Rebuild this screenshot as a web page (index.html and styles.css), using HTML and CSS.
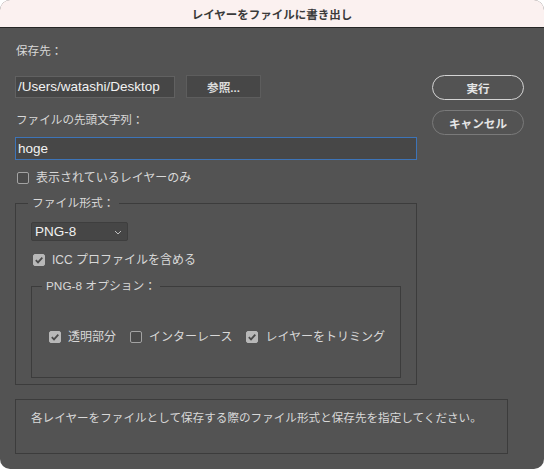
FILE: index.html
```html
<!DOCTYPE html>
<html lang="ja">
<head>
<meta charset="utf-8">
<link rel="stylesheet" href="styles.css">
</head>
<body>
<div class="window">
  <div class="titlebar">レイヤーをファイルに書き出し</div>
  <div class="content">
    <div class="top">
      <div class="main">
        <div class="label first">保存先：</div>
        <div class="pathrow">
          <div class="input path">/Users/watashi/Desktop</div>
          <div class="btn browse">参照...</div>
        </div>
        <div class="label second">ファイルの先頭文字列：</div>
        <div class="input prefix">hoge</div>
        <label class="check visible"><span class="box"></span><span>表示されているレイヤーのみ</span></label>
        <fieldset class="group outer">
          <legend>ファイル形式：</legend>
          <div class="select"><span>PNG-8</span><svg class="chev" width="8" height="5" viewBox="0 0 8 5"><path d="M1 1 L4 4 L7 1" fill="none" stroke="#bdbdbd" stroke-width="1"/></svg></div>
          <label class="check icc"><span class="box on"><svg viewBox="0 0 12 12" width="12" height="12"><path d="M2.8 6.2 L5 8.4 L9.3 3.6" fill="none" stroke="#4a4a4a" stroke-width="1.8"/></svg></span><span>ICC プロファイルを含める</span></label>
          <fieldset class="group inner">
            <legend>PNG-8 オプション：</legend>
            <div class="optrow">
              <label class="check"><span class="box on"><svg viewBox="0 0 12 12" width="12" height="12"><path d="M2.8 6.2 L5 8.4 L9.3 3.6" fill="none" stroke="#4a4a4a" stroke-width="1.8"/></svg></span><span>透明部分</span></label>
              <label class="check"><span class="box"></span><span>インターレース</span></label>
              <label class="check"><span class="box on"><svg viewBox="0 0 12 12" width="12" height="12"><path d="M2.8 6.2 L5 8.4 L9.3 3.6" fill="none" stroke="#4a4a4a" stroke-width="1.8"/></svg></span><span>レイヤーをトリミング</span></label>
            </div>
          </fieldset>
        </fieldset>
      </div>
      <div class="side">
        <div class="pill primary">実行</div>
        <div class="pill">キャンセル</div>
      </div>
    </div>
    <div class="desc">各レイヤーをファイルとして保存する際のファイル形式と保存先を指定してください。</div>
  </div>
</div>
</body>
</html>
```

FILE: styles.css
```css
html, body {
  margin: 0;
  padding: 0;
  background: #ffffff;
}
body {
  font-family: "Liberation Sans", "Noto Sans CJK JP", sans-serif;
  font-size: 12px;
  color: #d8d8d8;
}
.window {
  width: 544px;
  height: 469px;
  border-radius: 10px;
  overflow: hidden;
  background: #535353;
  display: flex;
  flex-direction: column;
}
.titlebar {
  height: 27px;
  flex: none;
  background: #fbf1f0;
  border-bottom: 1px solid #262626;
  color: #3a3a3a;
  font-weight: bold;
  font-size: 11.5px;
  display: flex;
  align-items: center;
  justify-content: center;
}
.content {
  padding: 0 20px 0 15px;
}
.top {
  display: flex;
  justify-content: space-between;
}
.main {
  width: 402px;
  display: flex;
  flex-direction: column;
}
.label {
  line-height: 16px;
  height: 16px;
  padding-left: 1px;
  font-size: 11.6px;
}
.label.first { margin-top: 15px; }
.pathrow {
  display: flex;
  gap: 11px;
  margin-top: 17px;
}
.input {
  box-sizing: border-box;
  height: 22px;
  background: #464646;
  border: 1px solid #616161;
  font-size: 13.5px;
  color: #f2f2f2;
  line-height: 20px;
  padding-left: 2px;
}
.path { width: 160px; }
.btn {
  box-sizing: border-box;
  width: 75px;
  height: 23px;
  margin-top: -1px;
  background: #474747;
  border: 1px solid #5d5d5d;
  color: #dcdcdc;
  font-weight: bold;
  font-size: 11.6px;
  display: flex;
  align-items: center;
  justify-content: center;
}
.label.second { margin-top: 14px; }
.prefix {
  width: 402px;
  height: 23px;
  margin-top: 9px;
  background: #474747;
  border: 1px solid #3d74b8;
  line-height: 21px;
}
.check {
  display: flex;
  align-items: center;
  gap: 7px;
  height: 16px;
  line-height: 16px;
  white-space: nowrap;
  flex: none;
}
.box {
  box-sizing: border-box;
  width: 12px;
  height: 12px;
  border: 1px solid #a3a3a3;
  border-radius: 2px;
  background: #4b4b4b;
  flex: none;
  display: flex;
}
.box.on {
  background: #b8b8b8;
  border-color: #b8b8b8;
}
.box.on svg { margin: -1px; }
.visible {
  margin-top: 10px;
  padding-left: 2px;
}
.group {
  margin: 0;
  padding: 0;
  border: 1px solid #3c3c3c;
  min-width: 0;
}
.group legend {
  padding: 0 4px;
  line-height: 16px;
  color: #d8d8d8;
  font-size: 11.8px;
}
.outer {
  width: 402px;
  box-sizing: border-box;
  margin-top: 9px;
  height: 190px;
  padding: 0 15px 0 15px;
}
.outer > legend { margin-left: -3px; }
.select {
  box-sizing: border-box;
  width: 97px;
  height: 19px;
  margin-top: 11px;
  background: #464646;
  border: 1px solid #3e3e3e;
  border-radius: 2px;
  display: flex;
  align-items: center;
  justify-content: space-between;
  padding: 0 5px 0 3px;
  font-size: 13.5px;
  color: #f0f0f0;
}
.chev { margin-top: 1px; }
.icc {
  margin-top: 11px;
  padding-left: 2px;
}
.inner {
  box-sizing: border-box;
  margin-top: 10px;
  width: 370px;
  height: 100px;
  padding: 0 17px;
}
.inner > legend { margin-left: -7px; }
.optrow {
  display: flex;
  gap: 14px;
  margin-top: 35px;
}
.side {
  display: flex;
  flex-direction: column;
  gap: 10px;
  margin-top: 47px;
  width: 92px;
}
.pill {
  box-sizing: border-box;
  height: 25px;
  border-radius: 13px;
  border: 1px solid #7a7a7a;
  color: #e6e6e6;
  font-weight: bold;
  font-size: 11.6px;
  display: flex;
  align-items: center;
  justify-content: center;
}
.pill.primary { border: 1.5px solid #d4d4d4; }
.desc {
  box-sizing: border-box;
  margin-top: 14px;
  width: 493px;
  height: 55px;
  border: 1px solid #3c3c3c;
  padding: 10px 0 0 15px;
  line-height: 16px;
  font-size: 11.6px;
}
```
